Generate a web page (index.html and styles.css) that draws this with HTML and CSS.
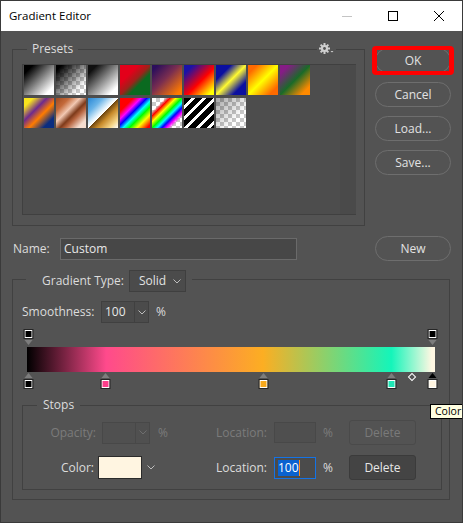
FILE: index.html
```html
<!DOCTYPE html>
<html>
<head>
<meta charset="utf-8">
<title>Gradient Editor</title>
<link rel="stylesheet" href="styles.css">
</head>
<body>
<div class="window">
  <header class="titlebar">
    <span class="title">Gradient Editor</span>
    <div class="controls">
      <span class="ctl"><svg width="10" height="10" viewBox="0 0 10 10"><line x1="0" y1="5.5" x2="10" y2="5.5" stroke="#c4c4c4" stroke-width="1"/></svg></span>
      <span class="ctl"><svg width="10" height="10" viewBox="0 0 10 10"><rect x="0.5" y="0.5" width="9" height="9" fill="none" stroke="#000" stroke-width="1"/></svg></span>
      <span class="ctl"><svg width="10" height="10" viewBox="0 0 10 10"><path d="M0 0 L10 10 M10 0 L0 10" stroke="#000" stroke-width="1"/></svg></span>
    </div>
  </header>

  <main class="content">
    <div class="top">
      <fieldset class="group presets">
        <legend>Presets</legend>
        <div class="preset-box">
          <div class="swatches">
            <div class="sw sw1"></div><div class="sw sw2"></div><div class="sw sw3"></div>
            <div class="sw sw4"></div><div class="sw sw5"></div><div class="sw sw6"></div>
            <div class="sw sw7"></div><div class="sw sw8"></div><div class="sw sw9"></div>
            <div class="sw sw10"></div><div class="sw sw11"></div><div class="sw sw12"></div>
            <div class="sw sw13"></div><div class="sw sw14"></div><div class="sw sw15"></div>
            <div class="sw sw16"></div>
          </div>
          <div class="scroll"></div>
        </div>
      </fieldset>
      <span class="gear"><svg width="15" height="11" viewBox="0 0 15 11"><g fill="#cfcfcf"><circle cx="5.5" cy="5.5" r="3.6"/><rect x="4.5" y="0" width="2" height="11"/><rect x="0" y="4.5" width="11" height="2"/><rect x="4.5" y="0" width="2" height="11" transform="rotate(45 5.5 5.5)"/><rect x="4.5" y="0" width="2" height="11" transform="rotate(-45 5.5 5.5)"/></g><circle cx="5.5" cy="5.5" r="1.4" fill="#535353"/><path d="M11.5 8 L14.5 8 L13 9.6 Z" fill="#cfcfcf"/></svg></span>
      <div class="buttons">
        <button class="btn ok">OK</button>
        <button class="btn">Cancel</button>
        <button class="btn">Load...</button>
        <button class="btn">Save...</button>
      </div>
    </div>

    <div class="name-row">
      <span class="name-label">Name:</span>
      <span class="name-input">Custom</span>
      <button class="btn new">New</button>
    </div>

    <fieldset class="group gradient">
      <legend class="gt-legend">
        <span>Gradient Type:</span>
        <span class="select">Solid<svg class="chev" width="8" height="5" viewBox="0 0 8 5"><path d="M0.5 0.5 L4 4 L7.5 0.5" fill="none" stroke="#bdbdbd"/></svg></span>
      </legend>

      <div class="smooth-row">
        <span class="smooth-label">Smoothness:</span>
        <span class="combo"><span class="val">100</span><span class="arrow"><svg width="8" height="5" viewBox="0 0 8 5"><path d="M0.5 0.5 L4 4 L7.5 0.5" fill="none" stroke="#bdbdbd"/></svg></span></span>
        <span class="pct">%</span>
      </div>

      <div class="ramp">
        <div class="track top-track">
          <div class="stop" style="left:0%"><span class="sq" style="background:#000"></span><span class="tri-down"></span></div>
          <div class="stop" style="left:100%"><span class="sq" style="background:#000"></span><span class="tri-down"></span></div>
        </div>
        <div class="bar"></div>
        <div class="track bottom-track">
          <div class="stop" style="left:0%"><span class="tri-up"></span><span class="sq" style="background:#000"></span></div>
          <div class="stop" style="left:19.3%"><span class="tri-up"></span><span class="sq" style="background:#ff3d8b"></span></div>
          <div class="stop" style="left:58.2%"><span class="tri-up"></span><span class="sq" style="background:#f8a91c"></span></div>
          <div class="stop" style="left:90%"><span class="tri-up"></span><span class="sq" style="background:#1fe8b6"></span></div>
          <span class="diamond" style="left:95%"></span>
          <div class="stop" style="left:100%"><span class="tri-up sel"></span><span class="sq" style="background:#fff5e1"></span></div>
        </div>
      </div>

      <fieldset class="group stops">
        <legend>Stops</legend>
        <div class="srow disabled">
          <div class="cell-a">
            <span class="lbl-op">Opacity:</span>
            <span class="combo dis"><span class="val"></span><span class="arrow"><svg width="8" height="5" viewBox="0 0 8 5"><path d="M0.5 0.5 L4 4 L7.5 0.5" fill="none" stroke="#6e6e6e"/></svg></span></span>
            <span class="pct">%</span>
          </div>
          <span class="lbl-loc">Location:</span>
          <span class="loc dis"></span>
          <span class="pct2">%</span>
          <button class="del dis">Delete</button>
        </div>
        <div class="srow">
          <div class="cell-a">
            <span class="lbl-col">Color:</span>
            <span class="color-sw"></span>
            <svg class="col-chev" width="8" height="5" viewBox="0 0 8 5"><path d="M0.5 0.5 L4 4 L7.5 0.5" fill="none" stroke="#bdbdbd"/></svg>
          </div>
          <span class="lbl-loc">Location:</span>
          <span class="loc active"><span class="selected">100</span><span class="caret"></span></span>
          <span class="pct2">%</span>
          <button class="del">Delete</button>
        </div>
      </fieldset>
    </fieldset>
  </main>

  <div class="tooltip">Color Stop</div>
</div>
</body>
</html>
```
FILE: styles.css
```css
html, body {
  margin: 0;
  padding: 0;
  background: #535353;
}

.window {
  width: 463px;
  height: 523px;
  box-sizing: border-box;
  border: 1px solid #3a3a3a;
  background: #535353;
  position: relative;
  overflow: hidden;
  font-family: "Open Sans", "Noto Sans", sans-serif;
  font-size: 12px;
  line-height: 16px;
  color: #dcdcdc;
}

/* title bar */
.titlebar {
  height: 30px;
  background: #ffffff;
  display: flex;
  align-items: center;
  color: #000;
}
.title {
  flex: 1;
  margin-left: 8px;
  font-size: 11.5px;
}
.controls { display: flex; }
.ctl {
  width: 46px;
  height: 30px;
  display: flex;
  align-items: center;
  justify-content: center;
}
.ctl svg { display: block; }

/* content */
.content {
  padding: 10px 11px 0 11px;
}

.top {
  display: flex;
  gap: 10px;
  align-items: flex-start;
  position: relative;
}

fieldset.group {
  margin: 0;
  border: 1px solid #414141;
  min-width: 0;
}
fieldset.group legend {
  line-height: 16px;
  color: #dcdcdc;
}

fieldset.presets {
  width: 353px;
  box-sizing: border-box;
  padding: 7px 8px 10px 9px;
}
fieldset.presets legend {
  padding: 0 5px;
  margin-left: 5px;
}

.gear {
  position: absolute;
  left: 305px;
  top: 2px;
  padding: 0 2px;
  background: #535353;
  display: flex;
}

.preset-box {
  height: 151px;
  box-sizing: border-box;
  border: 1px solid #404040;
  border-right: 0;
  background: #4d4d4d;
  display: flex;
}
.swatches {
  flex: 1;
  display: grid;
  grid-template-columns: repeat(9, 30px);
  grid-auto-rows: 30px;
  column-gap: 2px;
  row-gap: 3px;
  padding: 0 0 0 1px;
  align-content: start;
}
.scroll {
  width: 16px;
  background: #4a4a4a;
}

.sw { width: 30px; height: 30px; }
.sw1 { background: linear-gradient(135deg, #000 15%, #fff 85%); }
.sw2 { background: linear-gradient(135deg, #000 10%, rgba(0,0,0,0) 80%), repeating-conic-gradient(#c8c8c8 0 25%, #fff 0 50%) 0 0 / 8px 8px; }
.sw3 { background: linear-gradient(135deg, #101010 15%, #fff 85%); }
.sw4 { background: linear-gradient(135deg, #e3001a 30%, #a0201a 50%, #0a6a20 65%); }
.sw5 { background: linear-gradient(135deg, #2c0e5c 10%, #7a2e50 45%, #ff7a00 90%); }
.sw6 { background: linear-gradient(135deg, #1a12a8 15%, #ff0000 55%, #ffff00 90%); }
.sw7 { background: linear-gradient(135deg, #0b0fa0 25%, #fffa30 50%, #0b0fa0 78%); }
.sw8 { background: linear-gradient(135deg, #ff6a00 15%, #ffff00 50%, #ff6a00 85%); }
.sw9 { background: linear-gradient(135deg, #861c86 15%, #1a6a28 50%, #ff8a00 85%); }
.sw10 { background: linear-gradient(135deg, #f8e51d 15%, #6e2a8e 38%, #ff7c00 58%, #0a2d80 82%); }
.sw11 { background: linear-gradient(135deg, #a0491e 0%, #c46a3a 22%, #f2c8b2 40%, #7e3a1a 56%, #b76540 66%, #f5ddd0 86%); }
.sw12 { background: linear-gradient(135deg, #2886d4 0%, #6ab4e8 25%, #e8f4fb 45%, #fff 50%, #6b4410 51%, #c88a2a 65%, #f6d68a 85%, #fff 100%); }
.sw13 { background: linear-gradient(135deg, #f00 22%, #f0f 35%, #00f 45%, #0ff 55%, #0f0 65%, #ff0 78%, #f00 95%); }
.sw14 { background: linear-gradient(135deg, rgba(255,0,0,0) 22%, #f00 30%, #ff0 40%, #0f0 50%, #0ff 58%, #00f 66%, #f0f 74%, rgba(255,0,255,0) 82%), repeating-conic-gradient(#c8c8c8 0 25%, #fff 0 50%) 0 0 / 8px 8px; }
.sw15 { background: repeating-linear-gradient(135deg, #000 0 5px, #fff 5px 8px); }
.sw16 { background: linear-gradient(135deg, rgba(0,0,0,0.35) 0%, rgba(0,0,0,0) 70%), repeating-conic-gradient(#c8c8c8 0 25%, #fff 0 50%) 0 0 / 8px 8px; }

/* buttons */
.buttons {
  display: flex;
  flex-direction: column;
  gap: 9px;
  margin-top: 7px;
  width: 76px;
}
.btn {
  height: 25px;
  box-sizing: border-box;
  border: 1px solid #6e6e6e;
  border-radius: 13px;
  background: transparent;
  color: #e2e2e2;
  font-family: inherit;
  font-size: 12px;
  line-height: 16px;
  padding: 0;
}
.ok { position: relative; }
.ok::after {
  content: "";
  position: absolute;
  left: -4px;
  right: -4px;
  top: -3px;
  bottom: -3px;
  border-style: solid;
  border-color: #ff0000;
  border-width: 4px 5px;
  border-radius: 4px;
}

/* name row */
.name-row {
  display: flex;
  align-items: center;
  height: 25px;
  margin-top: 10px;
  padding-left: 1px;
}
.name-label { width: 47px; }
.name-input {
  width: 237px;
  height: 22px;
  box-sizing: border-box;
  border: 1px solid #6a6a6a;
  background: #474747;
  color: #e8e8e8;
  padding-left: 3px;
  line-height: 19px;
}
.new {
  margin-left: auto;
  width: 76px;
}

/* gradient group */
fieldset.gradient {
  margin-top: 6px;
  width: 438px;
  box-sizing: border-box;
  padding: 9px 7px 9px 9px;
}
.gt-legend {
  display: flex;
  align-items: center;
  padding: 3px 6px 0 16px;
  margin-left: 4px;
}
.select {
  margin-left: 5px;
  width: 57px;
  height: 22px;
  box-sizing: border-box;
  border: 1px solid #3f3f3f;
  background: #4b4b4b;
  display: flex;
  align-items: center;
  padding-left: 9px;
  color: #e2e2e2;
}
.select .chev { margin-left: auto; margin-right: 4px; }

.smooth-row {
  display: flex;
  align-items: center;
  height: 22px;
}
.smooth-label { width: 79px; }
.combo {
  width: 48px;
  height: 22px;
  box-sizing: border-box;
  border: 1px solid #404040;
  background: #4b4b4b;
  display: flex;
}
.combo .val {
  width: 33px;
  border-right: 1px solid #404040;
  padding-left: 3px;
  box-sizing: border-box;
  line-height: 20px;
  color: #e8e8e8;
}
.combo .arrow {
  flex: 1;
  display: flex;
  align-items: center;
  justify-content: center;
}
.pct { margin-left: 7px; }

/* gradient ramp */
.ramp {
  margin: 5px 0 0 5px;
  width: 408px;
}
.track {
  position: relative;
  margin-left: 1px;
  width: 404px;
}
.top-track { height: 19px; }
.bottom-track { height: 18px; }
.bar {
  height: 25px;
  background: linear-gradient(to right, #000 0%, #ff4a8c 19.4%, #fcae22 57.8%, #14f5ba 89.3%, #fff7e2 99.2%);
}
.stop {
  position: absolute;
  top: 0;
  width: 11px;
  transform: translateX(-50%);
  display: flex;
  flex-direction: column;
  align-items: center;
}
.sq {
  display: block;
  width: 6px;
  height: 6px;
  border: 1px solid #fff;
  outline: 1px solid #262626;
  margin-top: 2px;
}
.tri-down {
  display: block;
  width: 0;
  height: 0;
  margin-top: 2px;
  border-left: 4px solid transparent;
  border-right: 4px solid transparent;
  border-top: 5px solid #7d7d7d;
}
.tri-up {
  display: block;
  width: 0;
  height: 0;
  margin-top: 1px;
  border-left: 4px solid transparent;
  border-right: 4px solid transparent;
  border-bottom: 5px solid #7d7d7d;
}
.tri-up.sel { border-bottom-color: #000; }
.diamond {
  position: absolute;
  top: 2px;
  width: 4px;
  height: 4px;
  border: 1px solid #fff;
  transform: translateX(-50%) rotate(45deg);
}

/* stops group */
fieldset.stops {
  margin-top: 7px;
  width: 420px;
  box-sizing: border-box;
  padding: 7px 0 9px 1px;
}
fieldset.stops legend {
  padding: 0 6px;
  margin-left: 13px;
}
.srow {
  display: grid;
  grid-template-columns: 170px 80px 42px 33px 67px;
  align-items: center;
  height: 25px;
}
.srow + .srow { margin-top: 10px; }
.cell-a {
  display: flex;
  align-items: center;
}
.lbl-op { width: 72px; text-align: right; }
.cell-a .combo { margin-left: 6px; }
.cell-a .pct { margin-left: 8px; }
.lbl-col { width: 70px; text-align: right; }
.color-sw {
  margin-left: 4px;
  width: 44px;
  height: 23px;
  box-sizing: border-box;
  border: 1px solid #2b2b2b;
  background: #fff5e1;
}
.col-chev { margin-left: 5px; }
.lbl-loc {
  text-align: right;
  padding-right: 7px;
}
.loc {
  height: 22px;
  box-sizing: border-box;
  border: 1px solid #3e3e3e;
  background: #4b4b4b;
  display: flex;
  align-items: center;
  padding-left: 3px;
}
.loc.active { border-color: #1473e6; }
.selected {
  background: #0a62d0;
  color: #fff;
  line-height: 16px;
}
.caret {
  width: 1px;
  height: 16px;
  background: #ff8c1a;
}
.pct2 { padding-left: 7px; }
.del {
  height: 25px;
  box-sizing: border-box;
  border: 1px solid #3b3b3b;
  border-radius: 3px;
  background: #444444;
  color: #e6e6e6;
  font-family: inherit;
  font-size: 12px;
  padding: 0;
}

/* disabled state */
.disabled { color: #7b7b7b; }
.combo.dis { border-color: #484848; background: #505050; }
.combo.dis .val { border-right-color: #484848; }
.loc.dis { border-color: #484848; background: #4f4f4f; height: 21px; }
.del.dis {
  background: #535353;
  border-color: #4a4a4a;
  color: #7a7a7a;
}

/* tooltip */
.tooltip {
  position: absolute;
  left: 429px;
  top: 403px;
  background: #ffffe1;
  border: 1px solid #000;
  color: #000;
  font-size: 10.5px;
  line-height: 13px;
  padding: 0 4px;
  white-space: nowrap;
}
```
